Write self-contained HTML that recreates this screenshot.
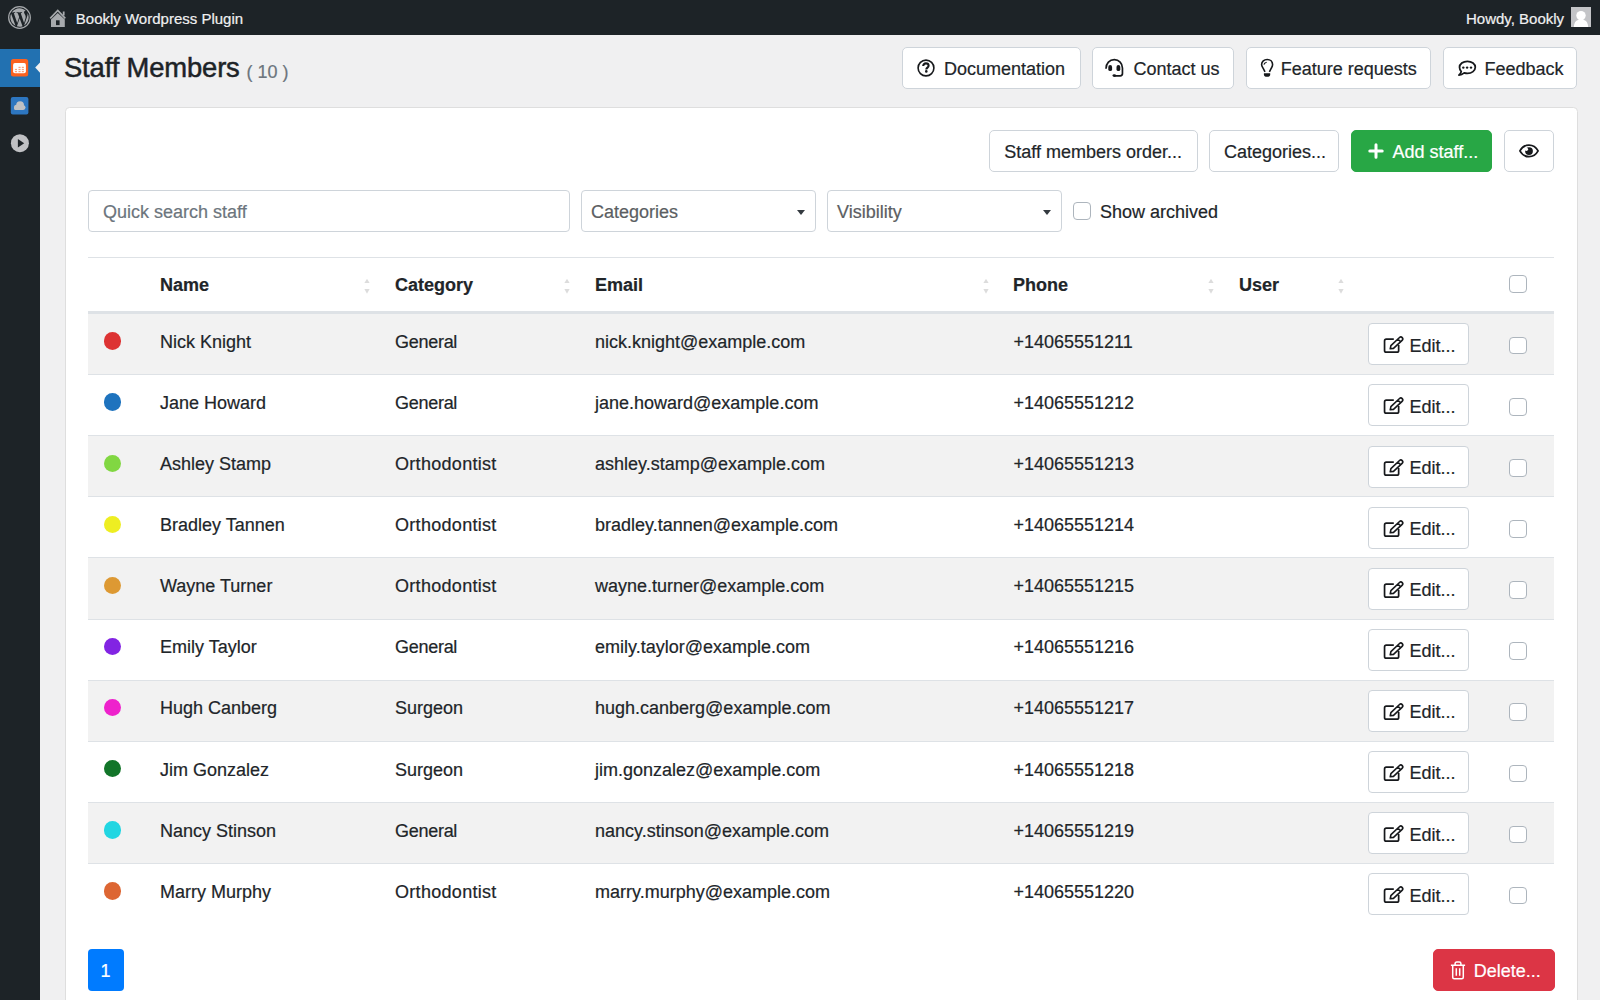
<!DOCTYPE html><html><head><meta charset="utf-8"><style>
*{box-sizing:border-box;margin:0;padding:0}
html,body{width:1600px;height:1000px;overflow:hidden;background:#f0f0f1;font-family:"Liberation Sans",sans-serif;color:#212529;-webkit-text-stroke:0.2px currentColor}
.abs{position:absolute}
svg{position:absolute;overflow:visible}
#topbar{position:absolute;left:0;top:0;width:1600px;height:35px;background:#1d2327}
#side{position:absolute;left:0;top:35px;width:40px;height:965px;background:#1d2327}
.tb-text{position:absolute;color:#f0f0f1;font-size:15px;line-height:18px;top:9px;white-space:nowrap}
.btn{position:absolute;background:#fff;border:1px solid #ced4da;border-radius:5px;font-size:18px;color:#212529;white-space:nowrap}
.btn span{position:absolute;line-height:20px}
.card{position:absolute;left:64.6px;top:107px;width:1513.2px;height:960px;background:#fff;border:1px solid #dedede;border-radius:4.5px}
.inp{position:absolute;background:#fff;border:1px solid #ced4da;border-radius:4px;font-size:18px;color:#6c757d}
.inp span{position:absolute;left:14px;top:10.7px;line-height:20px}
.caret{position:absolute;width:0;height:0;border-left:4px solid transparent;border-right:4px solid transparent;border-top:5px solid #343a40}
.cb{position:absolute;width:18px;height:18px;border:1px solid #adb5bd;border-radius:4px;background:#fff}
.row{position:absolute;left:88px;width:1466px;height:61.08px}
.bl{position:absolute;left:88px;width:1466px;height:1px;background:#dee2e6}
.t{position:absolute;font-size:18px;white-space:nowrap;line-height:20px}
.th{position:absolute;font-size:18px;font-weight:bold;white-space:nowrap;line-height:20px;top:275px}
.dot{position:absolute;left:15.5px;top:19px;width:17.5px;height:17.5px;border-radius:50%}
.edit{position:absolute;left:1280px;top:10px;width:100.5px;height:42px;background:#fff;border:1px solid #ced4da;border-radius:4px;font-size:18px}
</style></head><body>
<div id="topbar"></div><div id="side"></div>
<svg style="left:7.6px;top:6px" width="23" height="23" viewBox="0 0 24 24"><circle cx="12" cy="12" r="11.3" fill="none" stroke="#a7aaad" stroke-width="1.3"/><path fill="#a7aaad" transform="translate(12 12) scale(0.885) translate(-12 -12)" d="M21.469 6.825c.84 1.537 1.318 3.3 1.318 5.175 0 3.979-2.156 7.456-5.363 9.325l3.295-9.527c.615-1.54.82-2.771.82-3.864 0-.405-.026-.78-.07-1.11m-7.981.105c.647-.03 1.232-.105 1.232-.105.582-.075.514-.93-.067-.899 0 0-1.755.135-2.88.135-1.064 0-2.85-.15-2.85-.15-.585-.03-.661.855-.075.885 0 0 .54.061 1.125.09l1.68 4.605-2.37 7.08L5.354 6.9c.649-.03 1.234-.1 1.234-.1.585-.075.516-.93-.065-.896 0 0-1.746.138-2.874.138-.2 0-.438-.008-.69-.015C4.911 3.15 8.235 1.215 12 1.215c2.809 0 5.365 1.072 7.286 2.833-.046-.003-.091-.009-.141-.009-1.06 0-1.812.923-1.812 1.914 0 .89.513 1.643 1.06 2.531.411.72.89 1.643.89 2.977 0 .915-.354 1.994-.821 3.479l-1.075 3.585-3.9-11.61.001.014zM12 22.784c-1.059 0-2.081-.153-3.048-.437l3.237-9.406 3.315 9.087c.024.053.05.101.078.149-1.12.393-2.325.609-3.582.609M1.211 12c0-1.564.336-3.05.935-4.39L7.29 21.709C3.694 19.96 1.212 16.271 1.211 12"/></svg>
<svg style="left:0;top:0" width="80" height="35" viewBox="0 0 80 35"><path d="M50.2 18.3 L57.75 10.5 L65.3 18.3" fill="none" stroke="#a7aaad" stroke-width="1.7"/><rect x="62.8" y="11.5" width="1.8" height="4" fill="#a7aaad"/><path d="M51 19.5 L57.75 13 L64.8 19.5 L64.8 27 L51 27 Z" fill="#a7aaad"/><rect x="56" y="20.3" width="3.6" height="4.8" fill="#1d2327"/></svg>
<div class="tb-text" style="left:75.8px;top:9.6px">Bookly Wordpress Plugin</div>
<div class="tb-text" style="left:1466px;top:10px">Howdy, Bookly</div>
<svg style="left:1571px;top:7px" width="20" height="20" viewBox="0 0 20 20"><rect width="20" height="20" fill="#c3c4c7"/><circle cx="10" cy="8.6" r="4.7" fill="#fff"/><path d="M2.8 20 C3.2 15 5.5 12.6 10 12.6 C14.5 12.6 16.8 15 17.2 20 Z" fill="#fff"/></svg>
<div class="abs" style="left:0;top:49px;width:40px;height:38px;background:#2271b1"></div>
<svg style="left:0;top:40px" width="40" height="120" viewBox="0 40 40 120"><rect x="10.9" y="59" width="17.3" height="17.6" rx="2.5" fill="#fb6220"/><rect x="13.1" y="63.1" width="12.8" height="10.2" rx="1.8" fill="#fff"/><g fill="#fba27c"><rect x="18.5" y="66.8" width="2.1" height="1.2"/><rect x="21.8" y="66.8" width="2.1" height="1.2"/><rect x="14.9" y="68.9" width="2.1" height="1.2"/><rect x="18.5" y="68.9" width="2.1" height="1.2"/><rect x="21.8" y="68.9" width="2.1" height="1.2"/><rect x="14.9" y="71" width="2.1" height="1.2"/><rect x="18.5" y="71" width="2.1" height="1.2"/><rect x="21.8" y="71" width="2.1" height="1.2"/></g><path d="M40 62.4 L35.2 67.6 L40 72.8 Z" fill="#f0f0f1"/><rect x="10.8" y="97" width="17.6" height="17.6" rx="2" fill="#2d76c0"/><g fill="#c0c1c3"><circle cx="16.6" cy="107.4" r="2.6"/><circle cx="20.1" cy="105.1" r="3.9"/><circle cx="23.1" cy="107.6" r="2.4"/><rect x="16.3" y="107" width="7" height="3"/><circle cx="15.9" cy="108.1" r="1.9"/></g><circle cx="19.9" cy="143.2" r="9" fill="#c0c1c4"/><path d="M17.9 138.9 L24.2 143.2 L17.9 147.5 Z" fill="#1d2327"/></svg>
<div class="abs" style="left:64px;top:52.3px;font-size:27.4px;letter-spacing:-0.15px;line-height:32px;color:#1d2327;-webkit-text-stroke:0.5px #1d2327;white-space:nowrap">Staff Members</div>
<div class="abs" style="left:246.5px;top:61.7px;font-size:18px;line-height:20px;color:#6c757d;white-space:nowrap">( 10 )</div>
<div class="btn" style="left:902px;top:47px;width:178.5px;height:42px;"><span style="left:41px;top:10.5px">Documentation</span><svg style="left:14px;top:11.2px" width="18" height="18" viewBox="0 0 18 18"><circle cx="9" cy="9" r="7.9" fill="none" stroke="#16181b" stroke-width="1.6"/><path d="M6.2 7 C6.2 5.1 7.5 4.4 8.9 4.4 C10.5 4.4 11.6 5.4 11.6 6.8 C11.6 8.5 9.3 8.7 9.3 10.4" fill="none" stroke="#16181b" stroke-width="2.1"/><circle cx="9.3" cy="12.4" r="1.3" fill="#16181b"/></svg></div>
<div class="btn" style="left:1092px;top:47px;width:142px;height:42px;"><span style="left:40.5px;top:10.5px">Contact us</span><svg style="left:12.2px;top:10.8px" width="19" height="19" viewBox="0 0 19 19"><path d="M1.0 9.7 C1.0 4.3 4.6 0.65 9.3 0.65 C14 0.65 17.45 4.3 17.45 9 V14.6 C17.45 16 16.5 16.9 15.2 16.9 H9.5" fill="none" stroke="#16181b" stroke-width="1.7"/><rect x="3.3" y="6.1" width="3.8" height="6" rx="1.9" fill="#16181b"/><rect x="11.5" y="6.1" width="3.8" height="6" rx="1.9" fill="#16181b"/><ellipse cx="9.3" cy="16.6" rx="1.8" ry="1.3" fill="#16181b"/></svg></div>
<div class="btn" style="left:1246px;top:47px;width:185px;height:42px;"><span style="left:33.8px;top:10.5px">Feature requests</span><svg style="left:14px;top:11.4px" width="13" height="18" viewBox="0 0 13 18"><path d="M4 12.8 L2.1 9.2 C1.4 8.1 0.6 7 0.6 5.6 C0.6 2.6 3.1 0.5 6.2 0.5 C9.3 0.5 11.6 2.6 11.6 5.6 C11.6 7 11 8.1 10.3 9.2 L8.4 12.8" fill="none" stroke="#16181b" stroke-width="1.6"/><path d="M2.9 5.7 C3.1 4.4 4.2 3.4 5.7 3.2" fill="none" stroke="#16181b" stroke-width="1.1"/><path d="M2.9 14.3 H9.2 V15.5 C9.2 16.9 8.2 17.8 6.05 17.8 C3.9 17.8 2.9 16.9 2.9 15.5 Z" fill="#16181b"/></svg></div>
<div class="btn" style="left:1443px;top:47px;width:134px;height:42px;"><span style="left:40.4px;top:10.5px">Feedback</span><svg style="left:13.5px;top:11.5px" width="19" height="17" viewBox="0 0 19 17"><path d="M3.3 11.6 C2.1 10.5 1.5 9 1.5 7.35 C1.5 4 5 1.3 9.4 1.3 C13.8 1.3 17.3 4 17.3 7.35 C17.3 10.7 13.8 13.4 9.4 13.4 C8.3 13.4 7.2 13.2 6.2 12.9 C4.8 14 3 14.9 0.9 15.2 C2 14.2 2.9 13 3.3 11.6 Z" fill="none" stroke="#16181b" stroke-width="1.75" stroke-linejoin="round"/><circle cx="5.3" cy="7.6" r="1.2" fill="#16181b"/><circle cx="9.1" cy="7.6" r="1.2" fill="#16181b"/><circle cx="13" cy="7.6" r="1.2" fill="#16181b"/></svg></div>
<div class="card"></div>
<div class="btn" style="left:989px;top:130px;width:209px;height:42px;"><span style="left:14.3px;top:10.5px">Staff members order...</span></div>
<div class="btn" style="left:1209px;top:130px;width:130px;height:42px;"><span style="left:14px;top:10.5px">Categories...</span></div>
<div class="btn" style="left:1350.5px;top:130px;width:141.5px;height:42px;background:#28a745;border-color:#28a745;color:#fff"><span style="left:41px;top:10.5px">Add staff...</span><svg style="left:16.3px;top:12px" width="16" height="16" viewBox="0 0 16 16"><path d="M8 1.8 V14.2 M1.8 8 H14.2" stroke="#fff" stroke-width="3" stroke-linecap="round"/></svg></div>
<div class="btn" style="left:1503.5px;top:130px;width:50.5px;height:42px;"><span style="left:0px;top:10.5px"></span><svg style="left:14.5px;top:13px" width="21" height="14" viewBox="0 0 21 14"><path d="M0.9 6.9 C3 3.1 6.2 1.1 10 1.1 C13.8 1.1 17 3.1 19.1 6.9 C17 10.7 13.8 12.7 10 12.7 C6.2 12.7 3 10.7 0.9 6.9 Z" fill="none" stroke="#16181b" stroke-width="1.75" stroke-linejoin="round"/><circle cx="10" cy="7.1" r="3.9" fill="#16181b"/><circle cx="7.3" cy="5.3" r="1.75" fill="#fff"/></svg></div>
<div class="inp" style="left:88px;top:190px;width:481.5px;height:41.5px"><span>Quick search staff</span></div>
<div class="inp" style="left:581px;top:190px;width:234.5px;height:41.5px"><span style="left:9px;color:#5b5e62">Categories</span><div class="caret" style="left:215px;top:18.5px"></div></div>
<div class="inp" style="left:827px;top:190px;width:234.5px;height:41.5px"><span style="left:9px;color:#5b5e62">Visibility</span><div class="caret" style="left:215px;top:18.5px"></div></div>
<div class="cb" style="left:1072.8px;top:202px"></div>
<div class="t" style="left:1100px;top:201.5px">Show archived</div>
<div class="bl" style="top:257px"></div>
<div class="th" style="left:160px">Name</div>
<div class="th" style="left:395px">Category</div>
<div class="th" style="left:595px">Email</div>
<div class="th" style="left:1013px">Phone</div>
<div class="th" style="left:1239px">User</div>
<svg style="left:363.5px;top:278px" width="6" height="16" viewBox="0 0 6 16"><path d="M3 0.7 L5.6 5 L0.4 5Z" fill="#dcdcdc"/><path d="M3 15.7 L5.6 11 L0.4 11Z" fill="#dcdcdc"/></svg>
<svg style="left:563.5px;top:278px" width="6" height="16" viewBox="0 0 6 16"><path d="M3 0.7 L5.6 5 L0.4 5Z" fill="#dcdcdc"/><path d="M3 15.7 L5.6 11 L0.4 11Z" fill="#dcdcdc"/></svg>
<svg style="left:982.5px;top:278px" width="6" height="16" viewBox="0 0 6 16"><path d="M3 0.7 L5.6 5 L0.4 5Z" fill="#dcdcdc"/><path d="M3 15.7 L5.6 11 L0.4 11Z" fill="#dcdcdc"/></svg>
<svg style="left:1207.5px;top:278px" width="6" height="16" viewBox="0 0 6 16"><path d="M3 0.7 L5.6 5 L0.4 5Z" fill="#dcdcdc"/><path d="M3 15.7 L5.6 11 L0.4 11Z" fill="#dcdcdc"/></svg>
<svg style="left:1337.5px;top:278px" width="6" height="16" viewBox="0 0 6 16"><path d="M3 0.7 L5.6 5 L0.4 5Z" fill="#dcdcdc"/><path d="M3 15.7 L5.6 11 L0.4 11Z" fill="#dcdcdc"/></svg>
<div class="cb" style="left:1509px;top:275.4px"></div>
<div class="bl" style="top:311px;height:3px"></div>
<div class="abs" style="left:88px;top:314px;width:1466px;height:60px;background:#f2f2f2"></div>
<div class="abs" style="left:88px;top:435px;width:1466px;height:61px;background:#f2f2f2"></div>
<div class="abs" style="left:88px;top:557px;width:1466px;height:62px;background:#f2f2f2"></div>
<div class="abs" style="left:88px;top:680px;width:1466px;height:61px;background:#f2f2f2"></div>
<div class="abs" style="left:88px;top:802px;width:1466px;height:61px;background:#f2f2f2"></div>
<div class="bl" style="top:374px"></div>
<div class="bl" style="top:435px"></div>
<div class="bl" style="top:496px"></div>
<div class="bl" style="top:557px"></div>
<div class="bl" style="top:619px"></div>
<div class="bl" style="top:680px"></div>
<div class="bl" style="top:741px"></div>
<div class="bl" style="top:802px"></div>
<div class="bl" style="top:863px"></div>
<div class="row" style="top:313.40px"><div class="dot" style="background:#dd3333"></div><div class="t" style="left:72px;top:18.6px">Nick Knight</div><div class="t" style="left:307px;top:18.6px;letter-spacing:-0.28px">General</div><div class="t" style="left:507px;top:18.6px">nick.knight@example.com</div><div class="t" style="left:925.5px;top:18.6px">+14065551211</div><div class="edit" style="left:1280.4px;top:10px"><span class="t" style="left:40.2px;top:11.5px">Edit...</span><svg style="left:14.5px;top:12px" width="21" height="18" viewBox="0 0 21 18"><path d="M9.8 3.15 H2.3 C1.3 3.15 0.55 3.9 0.55 4.9 V14.4 C0.55 15.4 1.3 16.15 2.3 16.15 H12.9 C13.9 16.15 14.65 15.4 14.65 14.4 V9.1" fill="none" stroke="#16181b" stroke-width="1.7"/><g transform="translate(6.0 13.0) rotate(-43)"><path d="M0.3 0 L3 -1.9 H14.8 C15.8 -1.9 16.7 -1 16.7 0 C16.7 1 15.8 1.9 14.8 1.9 H3 Z M12.6 -1.9 V1.9" fill="none" stroke="#16181b" stroke-width="1.6" stroke-linejoin="round"/></g></svg></div><div class="cb" style="left:1421px;top:23.6px;width:17.5px;height:17.5px"></div></div>
<div class="row" style="top:374.48px"><div class="dot" style="background:#1e73be"></div><div class="t" style="left:72px;top:18.6px">Jane Howard</div><div class="t" style="left:307px;top:18.6px;letter-spacing:-0.28px">General</div><div class="t" style="left:507px;top:18.6px">jane.howard@example.com</div><div class="t" style="left:925.5px;top:18.6px">+14065551212</div><div class="edit" style="left:1280.4px;top:10px"><span class="t" style="left:40.2px;top:11.5px">Edit...</span><svg style="left:14.5px;top:12px" width="21" height="18" viewBox="0 0 21 18"><path d="M9.8 3.15 H2.3 C1.3 3.15 0.55 3.9 0.55 4.9 V14.4 C0.55 15.4 1.3 16.15 2.3 16.15 H12.9 C13.9 16.15 14.65 15.4 14.65 14.4 V9.1" fill="none" stroke="#16181b" stroke-width="1.7"/><g transform="translate(6.0 13.0) rotate(-43)"><path d="M0.3 0 L3 -1.9 H14.8 C15.8 -1.9 16.7 -1 16.7 0 C16.7 1 15.8 1.9 14.8 1.9 H3 Z M12.6 -1.9 V1.9" fill="none" stroke="#16181b" stroke-width="1.6" stroke-linejoin="round"/></g></svg></div><div class="cb" style="left:1421px;top:23.6px;width:17.5px;height:17.5px"></div></div>
<div class="row" style="top:435.56px"><div class="dot" style="background:#81d742"></div><div class="t" style="left:72px;top:18.6px">Ashley Stamp</div><div class="t" style="left:307px;top:18.6px;letter-spacing:0.3px">Orthodontist</div><div class="t" style="left:507px;top:18.6px">ashley.stamp@example.com</div><div class="t" style="left:925.5px;top:18.6px">+14065551213</div><div class="edit" style="left:1280.4px;top:10px"><span class="t" style="left:40.2px;top:11.5px">Edit...</span><svg style="left:14.5px;top:12px" width="21" height="18" viewBox="0 0 21 18"><path d="M9.8 3.15 H2.3 C1.3 3.15 0.55 3.9 0.55 4.9 V14.4 C0.55 15.4 1.3 16.15 2.3 16.15 H12.9 C13.9 16.15 14.65 15.4 14.65 14.4 V9.1" fill="none" stroke="#16181b" stroke-width="1.7"/><g transform="translate(6.0 13.0) rotate(-43)"><path d="M0.3 0 L3 -1.9 H14.8 C15.8 -1.9 16.7 -1 16.7 0 C16.7 1 15.8 1.9 14.8 1.9 H3 Z M12.6 -1.9 V1.9" fill="none" stroke="#16181b" stroke-width="1.6" stroke-linejoin="round"/></g></svg></div><div class="cb" style="left:1421px;top:23.6px;width:17.5px;height:17.5px"></div></div>
<div class="row" style="top:496.64px"><div class="dot" style="background:#eeee22"></div><div class="t" style="left:72px;top:18.6px">Bradley Tannen</div><div class="t" style="left:307px;top:18.6px;letter-spacing:0.3px">Orthodontist</div><div class="t" style="left:507px;top:18.6px">bradley.tannen@example.com</div><div class="t" style="left:925.5px;top:18.6px">+14065551214</div><div class="edit" style="left:1280.4px;top:10px"><span class="t" style="left:40.2px;top:11.5px">Edit...</span><svg style="left:14.5px;top:12px" width="21" height="18" viewBox="0 0 21 18"><path d="M9.8 3.15 H2.3 C1.3 3.15 0.55 3.9 0.55 4.9 V14.4 C0.55 15.4 1.3 16.15 2.3 16.15 H12.9 C13.9 16.15 14.65 15.4 14.65 14.4 V9.1" fill="none" stroke="#16181b" stroke-width="1.7"/><g transform="translate(6.0 13.0) rotate(-43)"><path d="M0.3 0 L3 -1.9 H14.8 C15.8 -1.9 16.7 -1 16.7 0 C16.7 1 15.8 1.9 14.8 1.9 H3 Z M12.6 -1.9 V1.9" fill="none" stroke="#16181b" stroke-width="1.6" stroke-linejoin="round"/></g></svg></div><div class="cb" style="left:1421px;top:23.6px;width:17.5px;height:17.5px"></div></div>
<div class="row" style="top:557.72px"><div class="dot" style="background:#dd9933"></div><div class="t" style="left:72px;top:18.6px">Wayne Turner</div><div class="t" style="left:307px;top:18.6px;letter-spacing:0.3px">Orthodontist</div><div class="t" style="left:507px;top:18.6px">wayne.turner@example.com</div><div class="t" style="left:925.5px;top:18.6px">+14065551215</div><div class="edit" style="left:1280.4px;top:10px"><span class="t" style="left:40.2px;top:11.5px">Edit...</span><svg style="left:14.5px;top:12px" width="21" height="18" viewBox="0 0 21 18"><path d="M9.8 3.15 H2.3 C1.3 3.15 0.55 3.9 0.55 4.9 V14.4 C0.55 15.4 1.3 16.15 2.3 16.15 H12.9 C13.9 16.15 14.65 15.4 14.65 14.4 V9.1" fill="none" stroke="#16181b" stroke-width="1.7"/><g transform="translate(6.0 13.0) rotate(-43)"><path d="M0.3 0 L3 -1.9 H14.8 C15.8 -1.9 16.7 -1 16.7 0 C16.7 1 15.8 1.9 14.8 1.9 H3 Z M12.6 -1.9 V1.9" fill="none" stroke="#16181b" stroke-width="1.6" stroke-linejoin="round"/></g></svg></div><div class="cb" style="left:1421px;top:23.6px;width:17.5px;height:17.5px"></div></div>
<div class="row" style="top:618.80px"><div class="dot" style="background:#8224e3"></div><div class="t" style="left:72px;top:18.6px">Emily Taylor</div><div class="t" style="left:307px;top:18.6px;letter-spacing:-0.28px">General</div><div class="t" style="left:507px;top:18.6px">emily.taylor@example.com</div><div class="t" style="left:925.5px;top:18.6px">+14065551216</div><div class="edit" style="left:1280.4px;top:10px"><span class="t" style="left:40.2px;top:11.5px">Edit...</span><svg style="left:14.5px;top:12px" width="21" height="18" viewBox="0 0 21 18"><path d="M9.8 3.15 H2.3 C1.3 3.15 0.55 3.9 0.55 4.9 V14.4 C0.55 15.4 1.3 16.15 2.3 16.15 H12.9 C13.9 16.15 14.65 15.4 14.65 14.4 V9.1" fill="none" stroke="#16181b" stroke-width="1.7"/><g transform="translate(6.0 13.0) rotate(-43)"><path d="M0.3 0 L3 -1.9 H14.8 C15.8 -1.9 16.7 -1 16.7 0 C16.7 1 15.8 1.9 14.8 1.9 H3 Z M12.6 -1.9 V1.9" fill="none" stroke="#16181b" stroke-width="1.6" stroke-linejoin="round"/></g></svg></div><div class="cb" style="left:1421px;top:23.6px;width:17.5px;height:17.5px"></div></div>
<div class="row" style="top:679.88px"><div class="dot" style="background:#ee22cc"></div><div class="t" style="left:72px;top:18.6px">Hugh Canberg</div><div class="t" style="left:307px;top:18.6px;letter-spacing:0px">Surgeon</div><div class="t" style="left:507px;top:18.6px">hugh.canberg@example.com</div><div class="t" style="left:925.5px;top:18.6px">+14065551217</div><div class="edit" style="left:1280.4px;top:10px"><span class="t" style="left:40.2px;top:11.5px">Edit...</span><svg style="left:14.5px;top:12px" width="21" height="18" viewBox="0 0 21 18"><path d="M9.8 3.15 H2.3 C1.3 3.15 0.55 3.9 0.55 4.9 V14.4 C0.55 15.4 1.3 16.15 2.3 16.15 H12.9 C13.9 16.15 14.65 15.4 14.65 14.4 V9.1" fill="none" stroke="#16181b" stroke-width="1.7"/><g transform="translate(6.0 13.0) rotate(-43)"><path d="M0.3 0 L3 -1.9 H14.8 C15.8 -1.9 16.7 -1 16.7 0 C16.7 1 15.8 1.9 14.8 1.9 H3 Z M12.6 -1.9 V1.9" fill="none" stroke="#16181b" stroke-width="1.6" stroke-linejoin="round"/></g></svg></div><div class="cb" style="left:1421px;top:23.6px;width:17.5px;height:17.5px"></div></div>
<div class="row" style="top:740.96px"><div class="dot" style="background:#127529"></div><div class="t" style="left:72px;top:18.6px">Jim Gonzalez</div><div class="t" style="left:307px;top:18.6px;letter-spacing:0px">Surgeon</div><div class="t" style="left:507px;top:18.6px">jim.gonzalez@example.com</div><div class="t" style="left:925.5px;top:18.6px">+14065551218</div><div class="edit" style="left:1280.4px;top:10px"><span class="t" style="left:40.2px;top:11.5px">Edit...</span><svg style="left:14.5px;top:12px" width="21" height="18" viewBox="0 0 21 18"><path d="M9.8 3.15 H2.3 C1.3 3.15 0.55 3.9 0.55 4.9 V14.4 C0.55 15.4 1.3 16.15 2.3 16.15 H12.9 C13.9 16.15 14.65 15.4 14.65 14.4 V9.1" fill="none" stroke="#16181b" stroke-width="1.7"/><g transform="translate(6.0 13.0) rotate(-43)"><path d="M0.3 0 L3 -1.9 H14.8 C15.8 -1.9 16.7 -1 16.7 0 C16.7 1 15.8 1.9 14.8 1.9 H3 Z M12.6 -1.9 V1.9" fill="none" stroke="#16181b" stroke-width="1.6" stroke-linejoin="round"/></g></svg></div><div class="cb" style="left:1421px;top:23.6px;width:17.5px;height:17.5px"></div></div>
<div class="row" style="top:802.04px"><div class="dot" style="background:#22d6e2"></div><div class="t" style="left:72px;top:18.6px">Nancy Stinson</div><div class="t" style="left:307px;top:18.6px;letter-spacing:-0.28px">General</div><div class="t" style="left:507px;top:18.6px">nancy.stinson@example.com</div><div class="t" style="left:925.5px;top:18.6px">+14065551219</div><div class="edit" style="left:1280.4px;top:10px"><span class="t" style="left:40.2px;top:11.5px">Edit...</span><svg style="left:14.5px;top:12px" width="21" height="18" viewBox="0 0 21 18"><path d="M9.8 3.15 H2.3 C1.3 3.15 0.55 3.9 0.55 4.9 V14.4 C0.55 15.4 1.3 16.15 2.3 16.15 H12.9 C13.9 16.15 14.65 15.4 14.65 14.4 V9.1" fill="none" stroke="#16181b" stroke-width="1.7"/><g transform="translate(6.0 13.0) rotate(-43)"><path d="M0.3 0 L3 -1.9 H14.8 C15.8 -1.9 16.7 -1 16.7 0 C16.7 1 15.8 1.9 14.8 1.9 H3 Z M12.6 -1.9 V1.9" fill="none" stroke="#16181b" stroke-width="1.6" stroke-linejoin="round"/></g></svg></div><div class="cb" style="left:1421px;top:23.6px;width:17.5px;height:17.5px"></div></div>
<div class="row" style="top:863.12px"><div class="dot" style="background:#dd6633"></div><div class="t" style="left:72px;top:18.6px">Marry Murphy</div><div class="t" style="left:307px;top:18.6px;letter-spacing:0.3px">Orthodontist</div><div class="t" style="left:507px;top:18.6px">marry.murphy@example.com</div><div class="t" style="left:925.5px;top:18.6px">+14065551220</div><div class="edit" style="left:1280.4px;top:10px"><span class="t" style="left:40.2px;top:11.5px">Edit...</span><svg style="left:14.5px;top:12px" width="21" height="18" viewBox="0 0 21 18"><path d="M9.8 3.15 H2.3 C1.3 3.15 0.55 3.9 0.55 4.9 V14.4 C0.55 15.4 1.3 16.15 2.3 16.15 H12.9 C13.9 16.15 14.65 15.4 14.65 14.4 V9.1" fill="none" stroke="#16181b" stroke-width="1.7"/><g transform="translate(6.0 13.0) rotate(-43)"><path d="M0.3 0 L3 -1.9 H14.8 C15.8 -1.9 16.7 -1 16.7 0 C16.7 1 15.8 1.9 14.8 1.9 H3 Z M12.6 -1.9 V1.9" fill="none" stroke="#16181b" stroke-width="1.6" stroke-linejoin="round"/></g></svg></div><div class="cb" style="left:1421px;top:23.6px;width:17.5px;height:17.5px"></div></div>
<div class="abs" style="left:88px;top:949px;width:36px;height:42px;background:#007bff;border-radius:4px;color:#fff;font-size:18px;line-height:20px"><span style="position:absolute;left:12.5px;top:11.5px">1</span></div>
<div class="btn" style="left:1433px;top:949px;width:121.5px;height:42px;background:#dc3545;border-color:#dc3545;color:#fff"><span style="left:39.8px;top:10.5px">Delete...</span><svg style="left:16px;top:11px" width="16" height="19" viewBox="0 0 16 19"><path d="M0.9 4.2 H15.1 M2.7 4.2 V16.3 C2.7 17.2 3.3 17.8 4.2 17.8 H11.8 C12.7 17.8 13.3 17.2 13.3 16.3 V4.2 M5.1 4.2 V2.6 C5.1 1.6 5.7 1 6.7 1 H9.3 C10.3 1 10.9 1.6 10.9 2.6 V4.2 M6.3 7.2 V14.8 M9.7 7.2 V14.8" fill="none" stroke="#fff" stroke-width="1.5"/></svg></div>
</body></html>
